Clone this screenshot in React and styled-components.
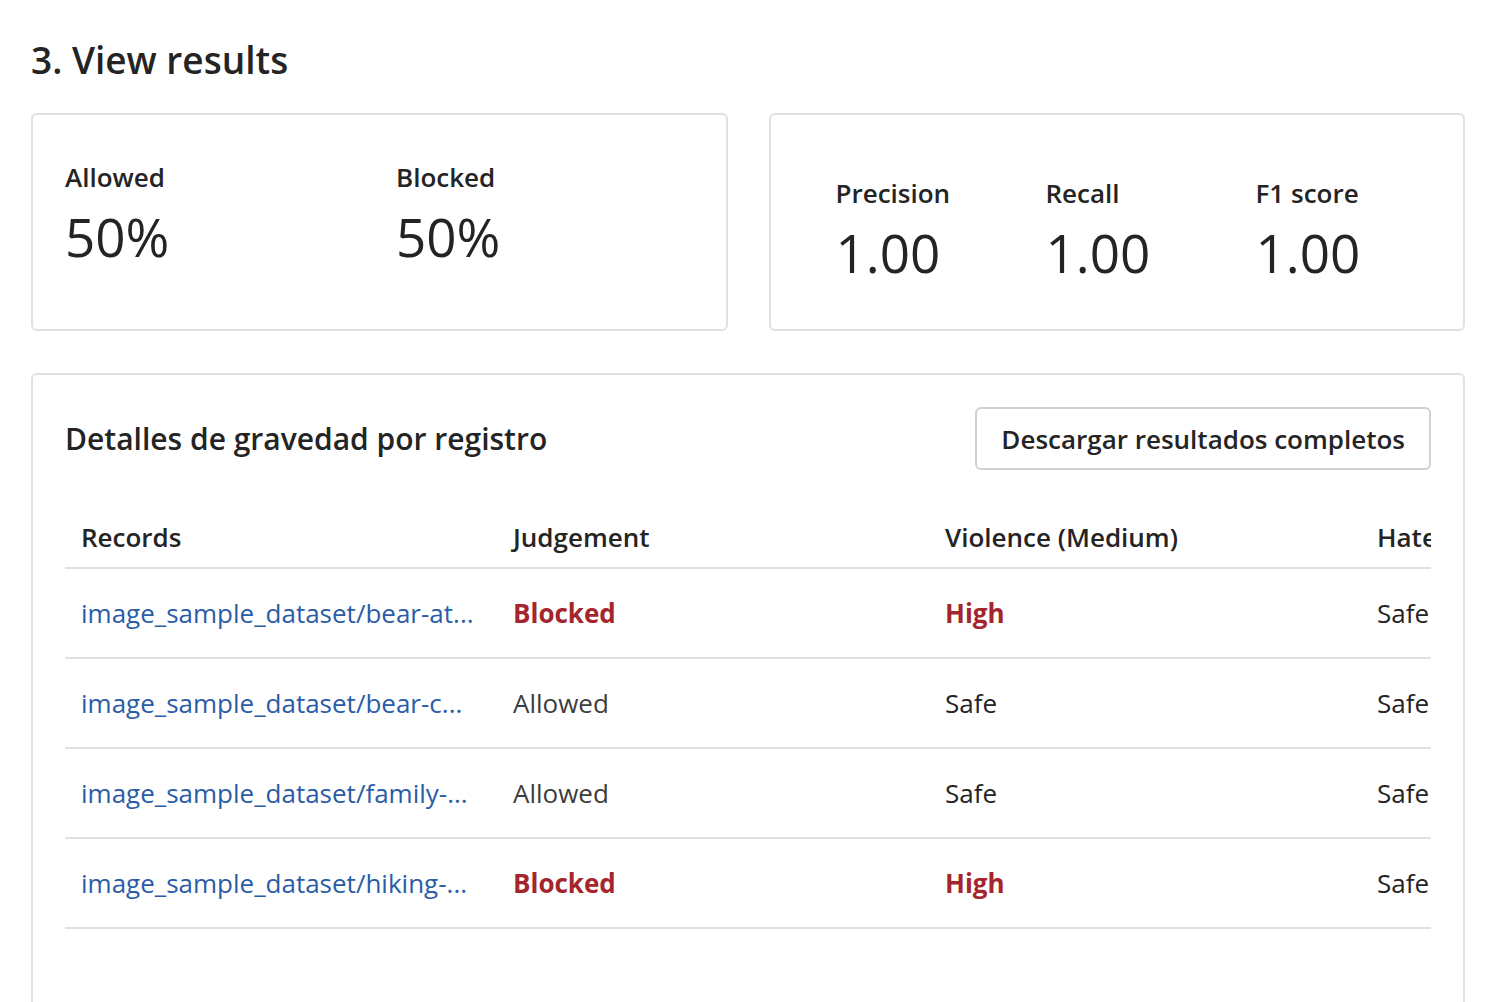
import React from 'react';
import styled, { createGlobalStyle } from 'styled-components';

const GlobalStyle = createGlobalStyle`
  html, body {
    margin: 0;
    padding: 0;
    background: #ffffff;
    font-family: "Open Sans", "Noto Sans", sans-serif;
    color: #242424;
  }
`;

const Page = styled.div`
  padding: 34px 41px 0 31px;
`;

const Heading = styled.h2`
  margin: 0 0 27px;
  font-size: 37px;
  line-height: 52px;
  font-weight: 600;
  color: #242424;
`;

const SummaryRow = styled.div`
  display: grid;
  grid-template-columns: minmax(0, 1fr) minmax(0, 1fr);
  gap: 41px;
  margin-bottom: 42px;
`;

const Card = styled.div`
  border: 2px solid #e0e0e0;
  border-radius: 6px;
  background: #fff;
  box-sizing: border-box;
`;

const StatCard = styled(Card)`
  height: 218px;
  display: grid;
  grid-template-columns: ${(p) => p.$columns};
  align-content: start;
  padding: ${(p) => p.$pad};
`;

const Stat = styled.div`
  display: flex;
  flex-direction: column;
`;

const StatLabel = styled.div`
  font-size: 26px;
  line-height: 36px;
  font-weight: 600;
  color: #242424;
`;

const StatValue = styled.div`
  margin-top: 9px;
  font-size: 53px;
  line-height: 66px;
  font-weight: 400;
  color: #242424;
`;

const DetailCard = styled(Card)`
  padding: 32px 32px 0 32px;
  min-height: 700px;
`;

const DetailHeader = styled.div`
  display: flex;
  align-items: center;
  justify-content: space-between;
  margin-bottom: 36px;
`;

const DetailTitle = styled.h3`
  margin: 0;
  font-size: 30px;
  font-weight: 600;
  color: #242424;
`;

const Button = styled.button`
  height: 63px;
  padding: 0 24px;
  border: 2px solid #d1d1d1;
  border-radius: 6px;
  background: #fff;
  font-family: inherit;
  font-size: 26px;
  font-weight: 600;
  color: #242424;
`;

const TableWrap = styled.div`
  overflow: hidden;
`;

const Table = styled.table`
  border-collapse: collapse;
  table-layout: fixed;
  width: 1728px;
`;

const Th = styled.th`
  width: 432px;
  box-sizing: border-box;
  padding: 0 16px;
  height: 62px;
  text-align: left;
  vertical-align: middle;
  font-size: 26px;
  font-weight: 600;
  color: #242424;
  border-bottom: 2px solid #e0e0e0;
  white-space: nowrap;
  overflow: hidden;
`;

const Td = styled.td`
  box-sizing: border-box;
  padding: 0 16px;
  height: 90px;
  vertical-align: middle;
  font-size: 26px;
  border-bottom: 2px solid #e0e0e0;
  white-space: nowrap;
  overflow: hidden;
  text-overflow: ellipsis;
`;

const LinkText = styled.span`
  color: #2a5ca8;
`;

const Level = styled.span`
  color: ${(p) => (p.$danger ? '#a4262c' : p.$muted ? '#3d3d3d' : '#242424')};
  font-weight: ${(p) => (p.$danger ? 700 : 400)};
`;

const rows = [
  { record: 'image_sample_dataset/bear-at...', judgement: 'Blocked', violence: 'High', hate: 'Safe' },
  { record: 'image_sample_dataset/bear-c...', judgement: 'Allowed', violence: 'Safe', hate: 'Safe' },
  { record: 'image_sample_dataset/family-...', judgement: 'Allowed', violence: 'Safe', hate: 'Safe' },
  { record: 'image_sample_dataset/hiking-...', judgement: 'Blocked', violence: 'High', hate: 'Safe' },
];

export default function App() {
  return (
    <>
      <GlobalStyle />
      <Page>
        <Heading>3. View results</Heading>
        <SummaryRow>
          <StatCard $columns="331px 331px" $pad="44px 0 0 32px">
            <Stat>
              <StatLabel>Allowed</StatLabel>
              <StatValue>50%</StatValue>
            </Stat>
            <Stat>
              <StatLabel>Blocked</StatLabel>
              <StatValue>50%</StatValue>
            </Stat>
          </StatCard>
          <StatCard $columns="210px 210px 210px" $pad="60px 0 0 65px">
            <Stat>
              <StatLabel>Precision</StatLabel>
              <StatValue>1.00</StatValue>
            </Stat>
            <Stat>
              <StatLabel>Recall</StatLabel>
              <StatValue>1.00</StatValue>
            </Stat>
            <Stat>
              <StatLabel>F1 score</StatLabel>
              <StatValue>1.00</StatValue>
            </Stat>
          </StatCard>
        </SummaryRow>
        <DetailCard>
          <DetailHeader>
            <DetailTitle>Detalles de gravedad por registro</DetailTitle>
            <Button>Descargar resultados completos</Button>
          </DetailHeader>
          <TableWrap>
            <Table>
              <thead>
                <tr>
                  <Th>Records</Th>
                  <Th>Judgement</Th>
                  <Th>Violence (Medium)</Th>
                  <Th>Hate</Th>
                </tr>
              </thead>
              <tbody>
                {rows.map((r) => (
                  <tr key={r.record}>
                    <Td><LinkText>{r.record}</LinkText></Td>
                    <Td><Level $danger={r.judgement === 'Blocked'} $muted>{r.judgement}</Level></Td>
                    <Td><Level $danger={r.violence === 'High'}>{r.violence}</Level></Td>
                    <Td><Level>{r.hate}</Level></Td>
                  </tr>
                ))}
              </tbody>
            </Table>
          </TableWrap>
        </DetailCard>
      </Page>
    </>
  );
}
